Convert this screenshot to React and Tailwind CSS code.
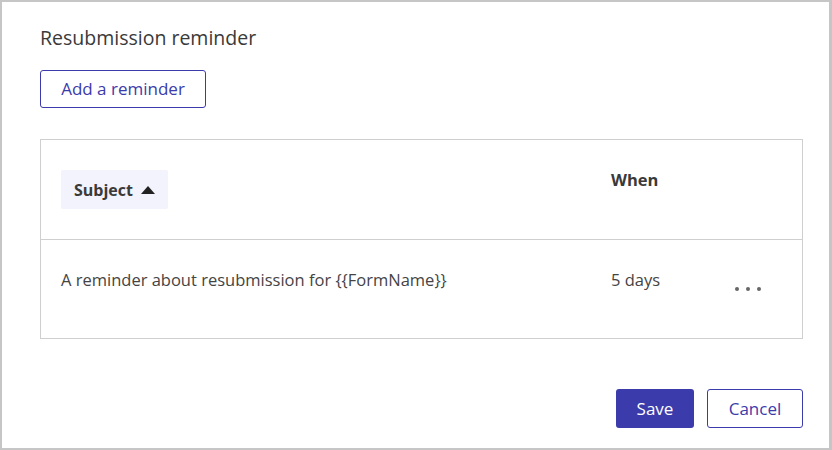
import React from "react";

export default function App() {
  const font = { fontFamily: '"Open Sans", "Noto Sans", Arial, sans-serif' };
  return (
    <div className="w-[832px] h-[450px] bg-white border-2 border-r-[3px] border-[#c6c6c6] text-[#333]" style={font}>
      <div className="pl-[38px] pr-[26px] pt-[24px]">
        <h2 className="text-[19.5px] leading-[24px] text-[#3a3a3a]">Resubmission reminder</h2>
        <button className="mt-[20px] h-[38px] w-[166px] border border-[#3b3bab] rounded-[3px] text-[#3b3bab] text-[17px]">
          Add a reminder
        </button>
        <div className="mt-[31px] border border-[#cfcfcf] h-[200px] flex flex-col">
          <div className="h-[100px] border-b border-[#cfcfcf] flex items-start pt-[30px] pl-[20px]">
            <div className="w-[550px]">
              <div className="inline-flex items-center gap-[8px] h-[39px] px-[13px] bg-[#f3f3fd] rounded-[2px] font-bold text-[16px] text-[#3a3a3a]">
                Subject
                <svg width="14" height="8" viewBox="0 0 14 8"><path d="M7 0L14 8H0z" fill="#222" /></svg>
              </div>
            </div>
            <div className="font-bold text-[16.5px] leading-[20px] text-[#3a3a3a]">When</div>
          </div>
          <div className="flex-1 flex items-start pt-[30px] pl-[20px] text-[16.5px] leading-[20px] text-[#444]">
            <div className="w-[550px]">A reminder about resubmission for {"{{FormName}}"}</div>
            <div className="w-[124px]">5 days</div>
            <div className="flex gap-[7px] mt-[17px]">
              <span className="w-[4px] h-[4px] rounded-full bg-[#666]"></span>
              <span className="w-[4px] h-[4px] rounded-full bg-[#666]"></span>
              <span className="w-[4px] h-[4px] rounded-full bg-[#666]"></span>
            </div>
          </div>
        </div>
        <div className="mt-[50px] flex justify-end gap-[13px]">
          <button className="h-[39px] w-[78px] rounded-[3px] bg-[#3b3bab] text-white text-[17px]">Save</button>
          <button className="h-[39px] w-[96px] rounded-[3px] border border-[#3b3bab] text-[#3b3bab] text-[17px]">Cancel</button>
        </div>
      </div>
    </div>
  );
}
